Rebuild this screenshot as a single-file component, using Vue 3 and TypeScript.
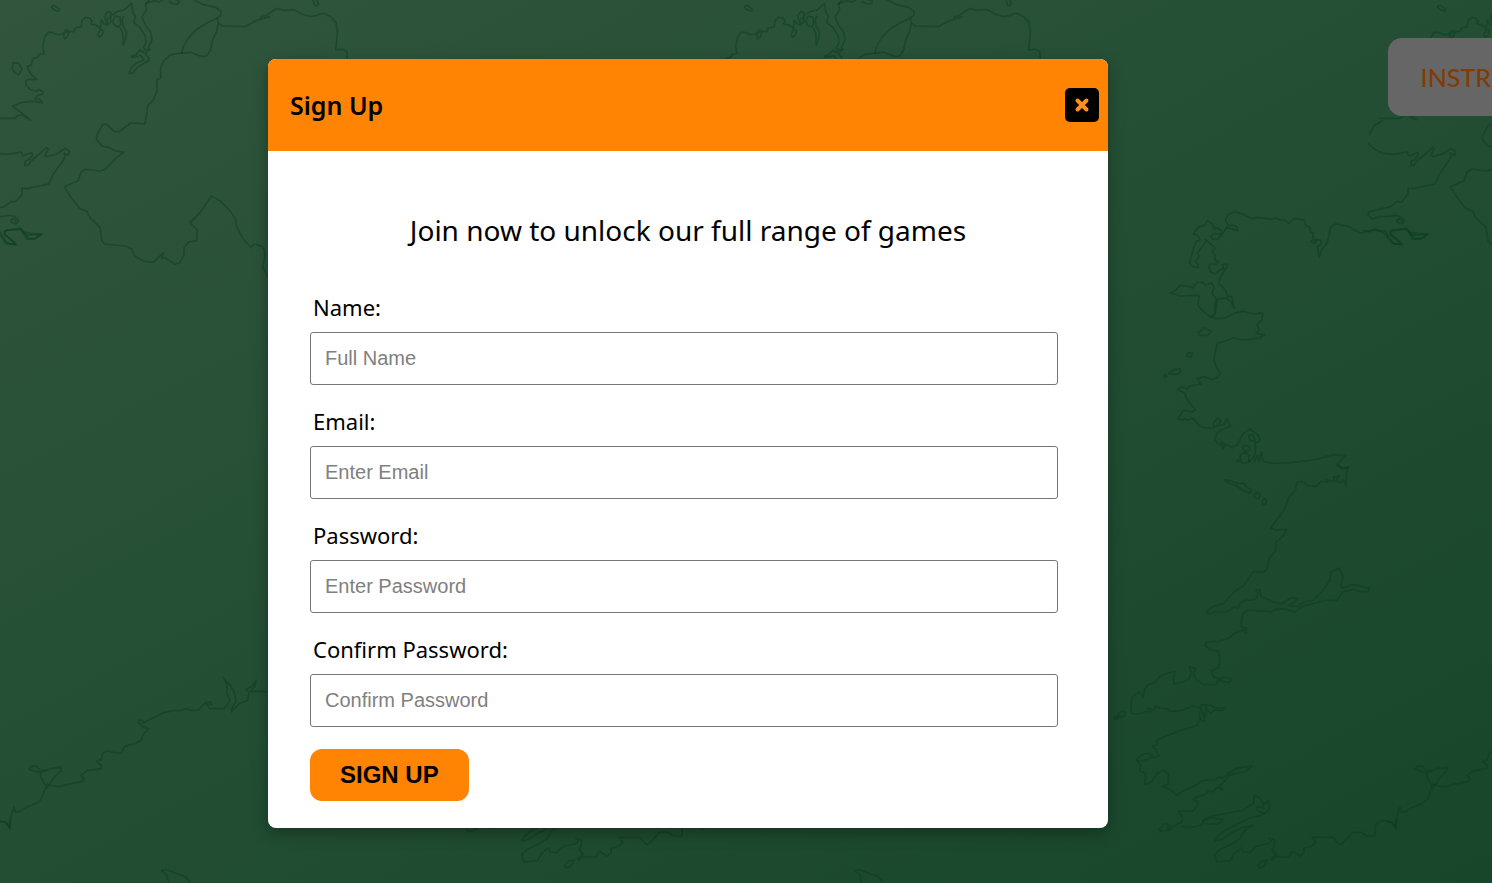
<script setup lang="ts">
import { reactive } from 'vue'

interface Field {
  id: 'name' | 'email' | 'password' | 'confirm'
  label: string
  type: string
  placeholder: string
}

interface Region {
  id: string
  transform: string
  lines: string[]
}

const fields: Field[] = [
  { id: 'name', label: 'Name:', type: 'text', placeholder: 'Full Name' },
  { id: 'email', label: 'Email:', type: 'email', placeholder: 'Enter Email' },
  { id: 'password', label: 'Password:', type: 'password', placeholder: 'Enter Password' },
  { id: 'confirm', label: 'Confirm Password:', type: 'password', placeholder: 'Confirm Password' },
]

const form = reactive({ name: '', email: '', password: '', confirm: '' })

/* Horizontal offsets at which the coast drawing repeats. */
const tiles = [0, -693, -1386]

/* Coastline and border polylines, grouped by area of the map. */
const regions: Region[] = [
  {
    id: 'north',
    transform: 'translate(1386 0) scale(0.3333)',
    lines: [
      '153,20 163,16 179,28 176,34 162,29 153,20',
      '37,208 40,188 56,190 66,208 56,224 44,218 37,208',
      '-20,355 46,355 52,347 68,345 78,354 91,360 60,335 38,319 62,308 90,304 110,305 127,309 120,298 104,297 112,287 128,282 130,276 116,268 110,274 90,268 78,256 78,242 88,238 110,238 96,226 84,208 82,200 94,196 97,176 112,173 118,162 132,162 128,138 134,112 144,97 156,97 172,104 188,102 198,90 208,94 202,110 194,117 191,108 196,96 222,94 226,84 244,80 246,62 256,52 270,54 276,64 272,72 290,76 300,86 311,92 306,106 298,112 294,102 300,92 304,60 312,72 322,76 314,48 324,34 332,38 332,66 324,74 320,60 340,42 352,34 372,30 394,10 400,40 406,48 402,68 420,82 436,108 438,128 430,144 436,148 430,158 420,150 408,164 396,168 394,172 412,170 422,166 432,180 408,190 394,204 387,220 398,220 414,200 446,182 446,172 436,162 446,150 436,148',
      '345,48 338,64 344,76 356,82 362,72 360,52 345,48',
      '372,48 366,60 370,80 380,96 376,120 370,136 368,100 362,84',
      '448,0 436,12 440,28 426,52 438,78 452,96 456,120 446,142 450,152',
      '436,12 462,2 478,6 494,-4',
      '506,4 520,12 534,12 538,4 524,-2',
      '580,-2 610,14 646,22 664,34 662,46 652,54 626,66 590,88 564,116 550,140 545,162',
      '652,54 655,70 668,78 736,80 768,62 810,50',
      '655,70 650,94 638,120 632,150 620,168 608,170 590,164 572,157 530,161 510,165 492,182 482,204 482,234 470,240 472,270 460,300 444,316 440,340 435,372 412,370 392,369 358,395 342,394 318,372 308,374 290,406 290,420 306,438 328,443 348,453 372,456 350,472 316,508 300,513 256,507 244,516 234,542 193,560 212,590 238,624 262,636 270,654 300,682 306,722 314,732 378,738 394,746 404,768 432,784 460,787 478,770 490,758 484,776 494,772 508,782 524,793 540,788 552,764 552,744 566,726 590,722 592,690 570,668 600,638 634,588 660,602 690,632 706,656 710,680 730,718 752,742 764,732 786,740 793,750 795,770 788,800 803,830',
      '-54,430 -36,446 -10,460 24,463 64,456 68,468 94,458 98,464 88,478 76,484 74,496 84,496 96,480 118,462 140,442 144,448 134,466 142,470 170,462 196,445 208,454 206,466 192,460 196,468 188,484 160,522 156,532 146,552 80,566 66,564 66,584 46,606 34,604 14,620 -20,628 -52,636 -54,644 -42,658 -20,650 4,650 28,646 44,650 56,662 48,672 36,668 32,660 40,656 54,670',
      '-70,690 -48,696 -32,686 0,704 18,730 46,734 36,722 12,704 18,692 44,688 60,684 70,696 92,700 124,704 104,716 86,716 62,686 36,688',
      '-50,405 -36,378 -8,360',
    ],
  },
  {
    id: 'north-east',
    transform: 'translate(1646 0) scale(0.3333)',
    lines: [
      '0,52 18,47 38,33 50,25 70,31 102,29 126,42 152,50 172,46 190,39 212,50 228,68 232,94 230,120 227,150 246,148 260,154 262,178',
      '160,-2 162,12 168,18 176,12 170,-2',
    ],
  },
  {
    id: 'south-east',
    transform: 'translate(1386 640) scale(0.3333)',
    lines: [
      '0,545 14,546 28,562 30,540 36,518 42,500 46,516 60,514 80,502 110,490 124,478 132,456 138,440 122,410 122,398 150,386 184,382 182,394 162,412 148,434 130,456',
      '122,398 100,392 88,388 92,380 110,378 118,390 138,392',
      '138,432 160,438 180,440 200,434 248,424 252,414 242,406 262,392 302,386 304,376 290,364 304,358 308,340 320,332 338,337 364,340 372,322 380,316 402,312 422,302 432,280 446,266 428,260 416,248 418,240 428,242 430,250 450,238 490,218 520,212 546,211 556,206 576,211 596,210 608,196 620,186 632,186 636,194 620,192 628,206 672,206 684,192 690,180 680,160 682,136 670,112 692,138 704,160 708,184 696,204 694,216 712,196 724,188 742,182 748,158 738,148 754,140 768,122 764,140 748,156 770,154 803,155',
      '483,690 502,690 534,702 556,710 572,728',
      '484,692 500,704 506,730',
    ],
  },
  {
    id: 'west',
    transform: 'translate(1100 180) scale(0.3333)',
    lines: [
      '396,136 384,136 376,118 386,102 404,95 430,102 444,110 456,116 470,112 516,118 528,114 546,122 554,120 566,130 584,116 612,120 618,136 632,144 630,156 640,160 638,176 650,184 640,190 632,184 640,178 662,180 664,192 652,200 658,232 666,208 682,188 692,142 706,132 742,138 782,160 814,150 858,154 864,168 880,190 908,194 898,184 872,162 870,154 882,150 908,148 924,150 936,166 984,162 964,176 938,178 918,144',
      '396,136 408,138 414,152 400,148 380,142 366,164 352,178 338,178 332,168 346,160 362,164 366,152 348,142 344,148 336,132 322,122 314,136 294,142 280,162 292,166 300,180 290,184 280,206 274,230 268,248 278,260 296,262 292,250 286,244 298,230 292,218 306,200 318,186 316,178 330,190 346,204 336,216 346,226 344,238 356,246 348,254 332,252 326,262 332,276 346,282 360,270 372,266 368,254 384,252 380,262 366,284 358,300 358,312 376,328 382,350 396,350 402,384 392,364 378,354 352,358 346,398 334,412 316,398 302,386 294,374 298,346 240,348 210,338 228,330 240,316 262,318 278,324 292,306 310,308 318,316 334,308 342,320 336,342 348,354 344,388 346,406',
      '334,408 346,416 374,414 402,400 430,394 462,402 488,398 486,420 470,434 478,450 468,460 494,464 480,474 448,478 426,480 402,474 352,490 346,514 342,540 350,562 360,580 352,594 336,598 310,590 292,596 304,612 268,618 262,626 248,620 232,628 254,640 262,660 286,690 276,696 250,692 234,716 246,720 258,716 262,722 276,714 286,722 298,738 316,744 342,744 340,732 352,714 362,722 356,734 344,742 374,732 380,716 392,738 368,748 350,760 344,780 354,790 366,796 370,806 376,796 362,786 396,802 412,794 420,778 432,758 450,746 458,754 474,764 480,780 472,788 450,780 446,768 456,762 464,776 466,800 466,820 456,838 446,846',
      '430,796 446,798 450,810 438,816 428,806 430,796',
      '408,844 424,842 420,826 434,816 448,826 446,846 430,850 416,838 408,844',
      '462,846 472,826 478,844 484,816 490,844 516,850 570,848 640,840 700,824 736,828 710,854 728,866 746,862',
      '294,458 314,444 334,454 324,466 296,466 294,458',
      '260,524 266,518 276,520 274,530 262,530 260,524',
      '190,588 196,584 202,590 196,592 190,588',
      '204,580 220,570 240,566 242,574 230,584 204,580',
    ],
  },
  {
    id: 'south-west',
    transform: 'translate(1100 450) scale(0.3333)',
    lines: [
      '710,44 728,56 746,52 738,74 738,104 728,88 722,98 708,92 718,78 700,82 704,96 676,88 684,98 664,94 648,110 628,108 604,94 592,96 586,120 566,144 552,180 512,234 526,240 560,238 550,258 528,276 526,304 508,324 500,358 488,368 462,364 430,408 404,424 372,460 340,470 320,484 326,492 342,486 384,484 404,470 414,474 420,460 434,452 466,448 476,432 468,420 480,418 484,440 520,456 544,462 572,444 596,444 580,458 566,466 592,470 612,456 640,450 664,428 690,390 692,366 716,354 730,382 722,406 728,414 758,404 808,414 804,424 782,426 760,418 728,426 710,452 680,450 610,468 584,486 552,476 528,478 512,488 500,484 446,480 430,488 424,512 424,532 440,536 438,548 428,540 402,550 388,564 358,574 320,576 316,586 328,598 354,604 360,626 356,652 334,664 340,680 362,688 372,680 394,688 388,698 368,694 356,690 346,704 312,704 292,692 280,674 286,656 268,650 274,666 268,686 250,696 222,702 220,684 226,664 202,670 184,676 160,700 144,704 134,718 130,740 118,726 96,740 92,780 96,790 116,792 140,784 154,786 142,774 162,780 166,768 180,774 202,776 210,784 242,782 278,768 302,774 312,800 316,816 302,810 298,794 304,774 302,764 334,766 344,774 376,774 366,782 342,780 334,790 322,782 318,770 316,800',
      '300,806 292,826 240,842 184,864 170,872 172,884 156,890 168,898 176,918 160,924 148,910 128,912 108,930 124,934 152,924 158,912',
      '108,930 122,944 120,962 138,972 134,1004 154,996 172,970 192,960 206,974 204,1004 186,1008 212,1020 230,1036 248,1024 264,1016 292,1004 302,994 324,990 346,990 354,980 370,984 386,970 408,956 456,948 438,964 388,976 370,998 358,1008 368,1020 350,1012 338,1026 326,1022 314,1034 294,1040 280,1048 294,1056 292,1068 278,1082 236,1084 248,1104 244,1116 222,1128 210,1140 184,1144 178,1138 192,1122 206,1124 214,1138 202,1138 204,1126',
      '244,1128 260,1134 304,1126 310,1110 330,1100 400,1086 428,1082 462,1058 462,1034 482,1046 490,1064 506,1052 508,1076 494,1092 472,1082 472,1070 492,1074 490,1064',
      '308,1112 332,1104 370,1108 354,1122 316,1122 308,1112',
      '494,1092 450,1104 412,1122 372,1144 350,1162 344,1174 366,1168 390,1152 424,1134 460,1126 434,1142 420,1166 396,1182 360,1198 344,1214 350,1236 392,1232 402,1212 424,1194 430,1206 450,1208 466,1190 510,1180 514,1170 506,1164 524,1170 522,1190 516,1200 530,1214 514,1224 516,1232 528,1220 566,1222 576,1204 600,1218 612,1210 612,1194 634,1190 648,1176 636,1162 700,1162 712,1178 722,1184 738,1170 756,1148 782,1146 800,1158 824,1158 826,1124 846,1112 878,1116 888,1138 890,1106',
      '472,1248 484,1234 502,1230 492,1248 480,1254 472,1248',
      '372,90 392,92 410,100 430,100 442,112 456,122 446,130 424,118 410,108 392,102 372,90',
      '460,136 470,126 482,134 476,146 464,144 460,136',
      '486,152 494,146 500,154 496,162 488,162 486,152',
      '42,802 50,798 52,808 44,808 42,802',
      '54,796 64,784 78,786 72,800 56,802 54,796',
    ],
  },
]
</script>

<template>
  <div class="page">
    <svg class="map" aria-hidden="true">
      <defs>
        <g id="coast">
          <g v-for="r in regions" :key="r.id" :transform="r.transform">
            <polyline v-for="points in r.lines" :key="points" :points="points" />
          </g>
        </g>
      </defs>
      <use v-for="x in tiles" :key="x" href="#coast" :x="x" />
    </svg>

    <nav class="nav">
      <button class="nav-button" type="button">INSTRUCTIONS</button>
    </nav>

    <div class="overlay">
      <section class="modal" role="dialog" aria-labelledby="modal-title">
        <header class="modal-header">
          <h2 id="modal-title">Sign Up</h2>
          <button class="close" type="button" aria-label="Close">
            <svg viewBox="0 0 34 34" aria-hidden="true">
              <rect width="34" height="34" rx="5" />
              <path d="M12.5 12.5l9 9M21.5 12.5l-9 9" />
            </svg>
          </button>
        </header>
        <form class="modal-body" @submit.prevent>
          <p class="lead">Join now to unlock our full range of games</p>
          <div v-for="f in fields" :key="f.id" class="field">
            <label :for="f.id">{{ f.label }}</label>
            <input :id="f.id" v-model="form[f.id]" :type="f.type" :placeholder="f.placeholder" />
          </div>
          <button class="submit" type="submit">SIGN UP</button>
        </form>
      </section>
    </div>
  </div>
</template>

<style>
body {
  margin: 0;
}
</style>

<style scoped>
.page {
  position: relative;
  min-height: 100vh;
  overflow: hidden;
  background: linear-gradient(152deg, #31553d 0%, #2a5239 25%, #234e34 50%, #1d4a2f 75%, #17462b 100%);
  font-family: "Noto Sans", "Open Sans", sans-serif;
  color: #000;
}

.map {
  position: absolute;
  inset: 0;
  width: 100%;
  height: 100%;
  fill: none;
  stroke: #083a20;
  stroke-opacity: 0.42;
  stroke-width: 5;
  stroke-linejoin: round;
}

.nav {
  position: absolute;
  top: 38px;
  left: 93%;
}

.nav-button {
  height: 78px;
  padding: 0 33px;
  border: 0;
  border-radius: 14px;
  background: #666;
  color: #803c04;
  font: 500 25px/32px Lato, "Noto Sans", sans-serif;
}

.overlay {
  position: relative;
  display: grid;
  grid-template-columns: 268fr 840fr 384fr;
  padding: 59px 0 56px;
}

.modal {
  grid-column: 2;
  border-radius: 8px;
  overflow: hidden;
  background: #fff;
  box-shadow: 0 5px 16px rgba(0, 0, 0, 0.3);
}

.modal-header {
  display: flex;
  align-items: center;
  justify-content: space-between;
  height: 92px;
  padding: 0 9px 0 22px;
  background: #ff8403;
}

.modal-header h2 {
  margin: 0;
  font-size: 25px;
  line-height: 36px;
  font-weight: 600;
}

.close {
  width: 34px;
  height: 34px;
  padding: 0;
  border: 0;
  background: none;
}

.close svg {
  display: block;
}

.close path {
  stroke: #ff8f1c;
  stroke-width: 4;
  stroke-linecap: round;
}

.modal-body {
  display: flex;
  flex-direction: column;
  align-items: stretch;
  padding: 59px 50px 27px 42px;
}

.lead {
  margin: 0 0 43px 8px;
  text-align: center;
  font-size: 28px;
  line-height: 40px;
}

.field {
  display: flex;
  flex-direction: column;
  gap: 11px;
  margin-bottom: 22px;
}

.field label {
  padding-left: 3px;
  font-size: 22px;
  line-height: 28px;
}

.field input {
  box-sizing: border-box;
  width: 100%;
  height: 53px;
  padding: 0 14px;
  border: 1px solid #767676;
  border-radius: 3px;
  background: #fff;
  font: 20px "Liberation Sans", Arial, sans-serif;
}

.field input::placeholder {
  color: #808080;
}

.submit {
  align-self: flex-start;
  height: 52px;
  padding: 0 30px;
  border: 0;
  border-radius: 12px;
  background: #ff8403;
  color: #000;
  font: bold 24px "Liberation Sans", Arial, sans-serif;
}
</style>
